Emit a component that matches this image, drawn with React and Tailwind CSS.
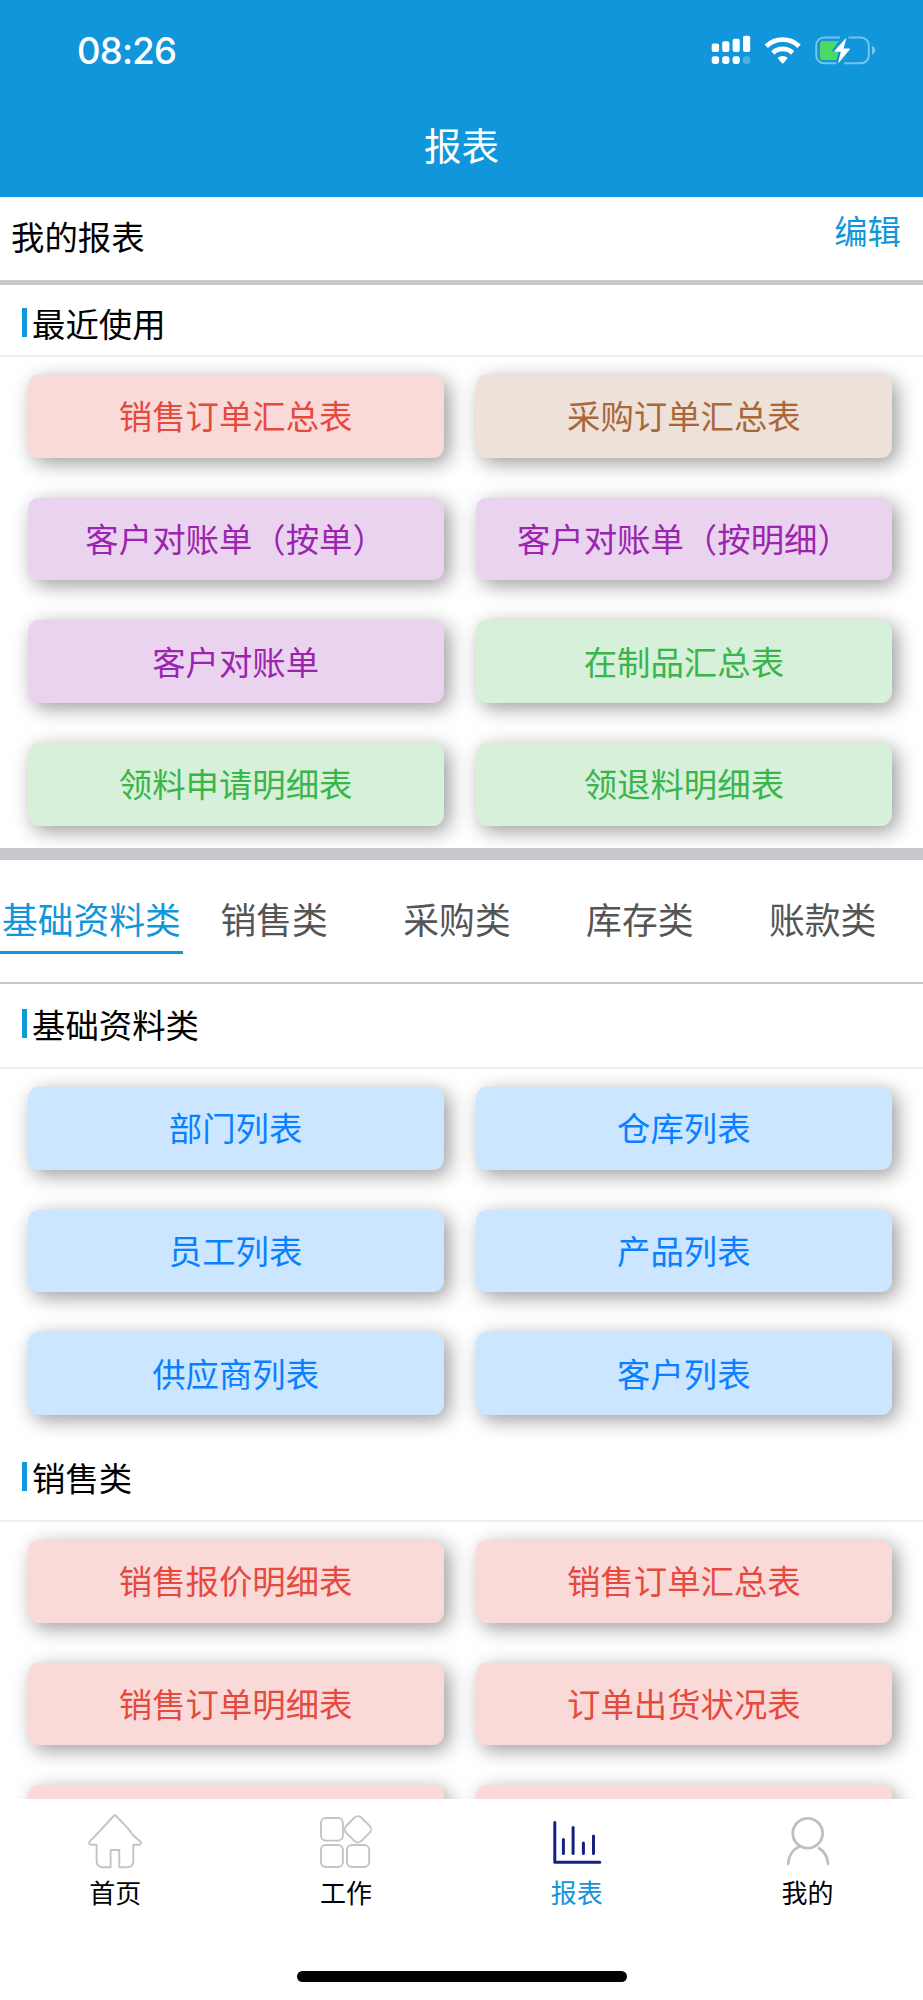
import React from 'react';
import clsx from 'clsx';

const TONES = {
  red: 'bg-[#fadad9] text-[#e64a3e]',
  brown: 'bg-[#eee1d9] text-[#a9673a]',
  purple: 'bg-[#ead3ef] text-[#9b25ae]',
  green: 'bg-[#d7f0da] text-[#39b54a]',
  blue: 'bg-[#cce6ff] text-[#0a7fff]',
};

const RECENT = [
  { label: '销售订单汇总表', tone: 'red' },
  { label: '采购订单汇总表', tone: 'brown' },
  { label: '客户对账单（按单）', tone: 'purple' },
  { label: '客户对账单（按明细）', tone: 'purple' },
  { label: '客户对账单', tone: 'purple' },
  { label: '在制品汇总表', tone: 'green' },
  { label: '领料申请明细表', tone: 'green' },
  { label: '领退料明细表', tone: 'green' },
];

const BASIC = ['部门列表', '仓库列表', '员工列表', '产品列表', '供应商列表', '客户列表'].map(label => ({ label, tone: 'blue' }));

// the last two cards are cut off by the tab bar
const SALES = ['销售报价明细表', '销售订单汇总表', '销售订单明细表', '订单出货状况表', '', ''].map(label => ({ label, tone: 'red' }));

const CATEGORIES = ['基础资料类', '销售类', '采购类', '库存类', '账款类'];

const StatusIcons = () => (
  <svg className="h-[30px] w-[165px]" viewBox="711 35 165 30" fill="#fff">
    <rect x="711.7" y="43.5" width="7.4" height="8.5" rx="2" />
    <rect x="722.2" y="41.2" width="7.2" height="10.8" rx="2" />
    <rect x="732.6" y="38.7" width="7.2" height="13.3" rx="2" />
    <rect x="743" y="35.8" width="7.2" height="16.2" rx="2" />
    <rect x="711.7" y="56.2" width="7.4" height="7.8" rx="2.4" />
    <rect x="722.2" y="56.2" width="7.2" height="7.8" rx="2.4" />
    <rect x="732.6" y="56.2" width="7.2" height="7.8" rx="2.4" />
    <rect x="743" y="56.2" width="7.2" height="7.8" rx="2.4" opacity="0.25" />
    <g fill="none" stroke="#fff" strokeWidth="4.8">
      <path d="M766.3 46.3a23.6 23.6 0 0 1 32.8 0" />
      <path d="M772.8 52.9a14.3 14.3 0 0 1 19.8 0" />
    </g>
    <path d="M777.6 58a7.5 7.5 0 0 1 10.2 0l-4.4 5.2q-.7.6-1.4 0z" />
    <path d="M840 37.4H824a7.8 7.8 0 0 0-7.8 7.8v10.3a7.8 7.8 0 0 0 7.8 7.8h12.5M848.5 37.4H861a7.8 7.8 0 0 1 7.8 7.8v10.3a7.8 7.8 0 0 1-7.8 7.8H844" fill="none" stroke="#fff" strokeOpacity="0.42" strokeWidth="2" />
    <path d="M872 46q3.2 1 3.2 4.2t-3.2 4.2z" opacity="0.45" />
    <path d="M822.5 41H838.5L831.5 51.5H838.5L836.5 60H822.5a2.5 2.5 0 0 1-2.5-2.5V43.5a2.5 2.5 0 0 1 2.5-2.5z" fill="#4cd964" />
    <path d="M845.6 38.4L834.6 50.8q-.5.9.4.9h5.8L838.2 62.2q.2.8 1 .1L849.7 49.4q.4-.9-.5-.9H843.6L846.2 38.8z" />
  </svg>
);

const TABS = [
  {
    label: '首页',
    stroke: '#c4c4c4',
    width: 1.9,
    icon: <path d="M28.6 4q1.3-1.300 2.600 0l10.500 11.200q4 3.500 5.500 7.300l8.400 7.200q1.300 2.500-1.300 3H48.300V49q0 6.300-6.300 6.300h-7.700V38h-8.700v17.300h-7.700q-6.300 0-6.300-6.300V32.700H5.800q-2.600-.5-1.300-3l8-8.200z" />,
  },
  {
    label: '工作',
    stroke: '#c4c4c4',
    width: 1.9,
    icon: (
      <>
        <rect x="4.9" y="6" width="22" height="22.6" rx="5" />
        <rect x="4.9" y="33" width="22" height="22" rx="5" />
        <rect x="31" y="33" width="22.2" height="22" rx="5" />
        <rect x="31.2" y="6.6" width="21.4" height="21.4" rx="5" transform="rotate(45 41.9 17.3)" />
      </>
    ),
  },
  {
    label: '报表',
    stroke: '#14207f',
    width: 3,
    active: true,
    icon: <path d="M7.8 10.5v39.800h45M16.400 27.500v14M26.100 15.500v26M36.400 31v10.500M46.500 24v17.500" />,
  },
  {
    label: '我的',
    stroke: '#bfbfbf',
    width: 2.8,
    icon: (
      <>
        <circle cx="29.7" cy="21.3" r="14.9" />
        <path d="M10.2 51.8q.8-12.500 10.800-17M41 36.300q8.400 5 9 15.500" />
      </>
    ),
  },
];

function SectionTitle({ children, compact }) {
  return (
    <div className={clsx('flex items-start border-b-2 border-[#eeeeee] pl-[22px]', compact ? 'h-[72px] pt-[23px]' : 'h-[85px] pt-[25px]')}>
      <span className="h-[29px] w-[5px] shrink-0 bg-[#1296db]" />
      <span className="-mt-px ml-[5px] text-[33.4px] leading-[32px] text-black">{children}</span>
    </div>
  );
}

function CardGrid({ items }) {
  return (
    <div className="grid grid-cols-2 gap-x-[32px] gap-y-[40px] pt-[18px] pr-[31px] pl-[27.5px]">
      {items.map((item, i) => (
        <div
          key={i}
          className={clsx('flex h-[82.7px] items-center justify-center rounded-[11px] pb-[3px] text-[33.4px] leading-none shadow-[5px_5px_20px_rgba(0,0,0,0.4)]', TONES[item.tone])}
        >
          {item.label}
        </div>
      ))}
    </div>
  );
}

export default function App() {
  return (
    <div className="flex h-[2000px] w-[923px] flex-col overflow-hidden bg-white font-['Noto_Sans_CJK_SC',sans-serif]">
      <header className="h-[197px] shrink-0 bg-[#1296db] text-white">
        <div className="flex h-[100px] items-start justify-between pt-[35px] pr-[47px] pl-[77px]">
          <span className="pt-px font-['Inter',sans-serif] text-[36.5px] leading-[31px] font-medium tracking-[-0.8px]">08:26</span>
          <StatusIcons />
        </div>
        <h1 className="pt-[25px] text-center text-[37.5px] leading-[38px]">报表</h1>
      </header>

      <main className="min-h-0 flex-1 overflow-hidden">
        <div className="flex h-[88px] items-start justify-between border-b-[5px] border-[#c8c7cc] pt-[16px] pr-[22px] pl-[11px] text-[33.4px] leading-[34px]">
          <span className="pt-[6px] text-black">我的报表</span>
          <span className="text-[#1296db]">编辑</span>
        </div>

        <SectionTitle compact>最近使用</SectionTitle>
        <div className="h-[491px] overflow-hidden">
          <CardGrid items={RECENT} />
        </div>

        <div className="h-[12px] bg-[#c8c7cc]" />

        <nav className="flex h-[124px] border-b-2 border-[#c8c8c8] pt-[35px] pr-[9px]">
          {CATEGORIES.map((name, i) => (
            <div
              key={name}
              className={clsx(
                'flex h-[59px] w-[182.8px] shrink-0 justify-center border-b-[3px] pt-[5px] text-[35.8px] leading-[36px] whitespace-nowrap',
                i === 0 ? 'border-[#1296db] text-[#1296db]' : 'border-transparent text-[#555555]',
              )}
            >
              {name}
            </div>
          ))}
        </nav>

        <SectionTitle>基础资料类</SectionTitle>
        <div className="h-[368px]">
          <CardGrid items={BASIC} />
        </div>

        <SectionTitle>销售类</SectionTitle>
        <CardGrid items={SALES} />
      </main>

      <footer className="h-[201px] shrink-0 bg-white">
        <div className="grid grid-cols-4 pt-[13px]">
          {TABS.map(tab => (
            <div key={tab.label} className="flex flex-col items-center">
              <svg className="size-[60px]" viewBox="0 0 60 60" fill="none" stroke={tab.stroke} strokeWidth={tab.width} strokeLinecap="round" strokeLinejoin="round">
                {tab.icon}
              </svg>
              <span className={clsx('mt-[6px] text-[26px] leading-[28px]', tab.active ? 'text-[#1296db]' : 'text-black')}>{tab.label}</span>
            </div>
          ))}
        </div>
        {/* home indicator */}
        <div className="mx-auto mt-[65px] h-[11px] w-[330px] rounded-full bg-black" />
      </footer>
    </div>
  );
}
